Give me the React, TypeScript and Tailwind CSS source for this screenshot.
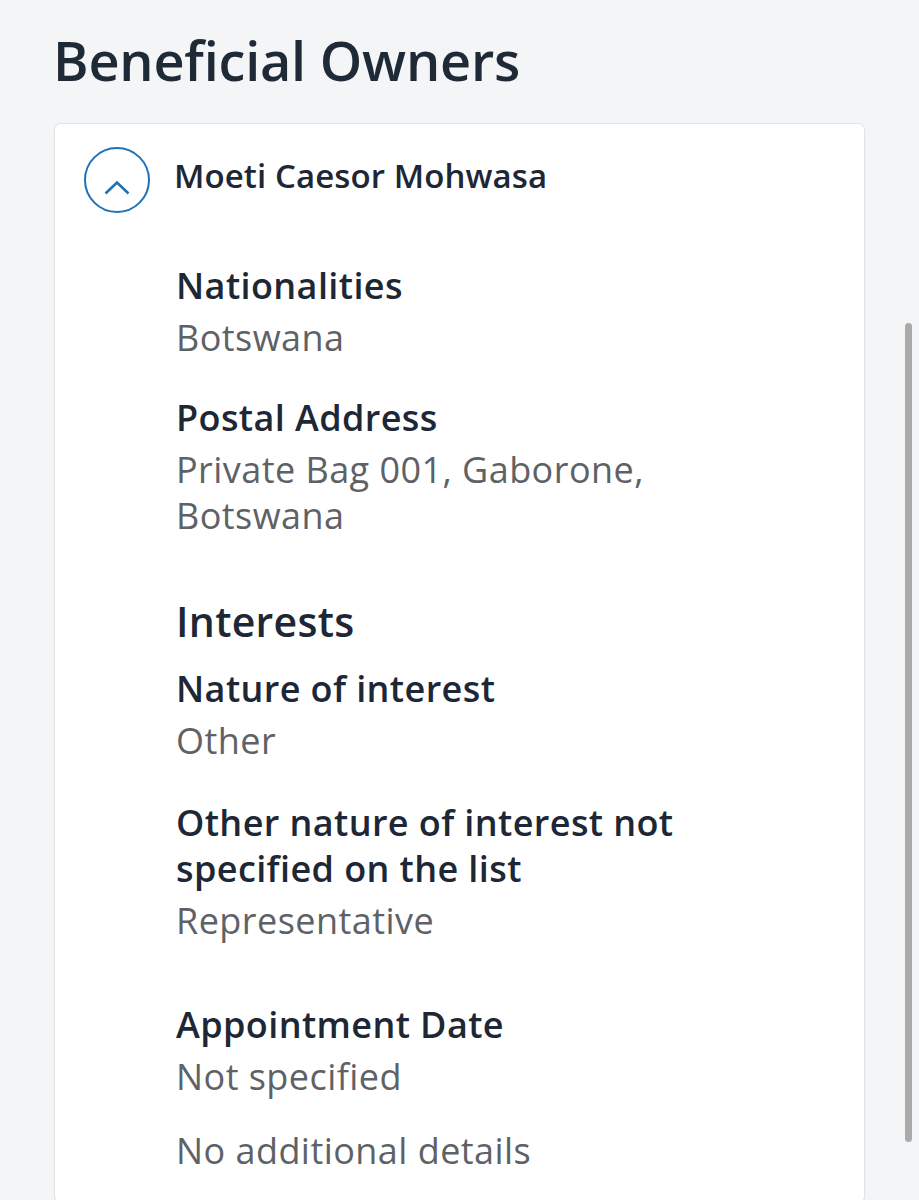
import React from "react";

function Field({ label, value, className = "" }: { label: string; value: string; className?: string }) {
  return (
    <div className={className}>
      <div className="text-[36px] leading-[46px] font-semibold tracking-[0.4px] text-[#1d2735]">{label}</div>
      <div className="mt-[6px] text-[36px] leading-[46px] font-normal tracking-[0.45px] text-[#5e6165]">{value}</div>
    </div>
  );
}

export default function App() {
  return (
    <div className="relative min-h-[1200px] h-[1200px] overflow-hidden bg-[#f4f5f7] font-['Open_Sans',sans-serif] pt-[28px]">
      <h1 className="ml-[53px] text-[54px] leading-[65px] font-semibold text-[#1f2a37] tracking-[-0.2px]">
        Beneficial Owners
      </h1>
      <div className="ml-[54px] mt-[30px] w-[811px] h-[1080px] bg-white border border-[#e1e3e7] rounded-[7px] shadow-[0_1px_2px_rgba(0,0,0,0.06)] pt-[23px] pl-[29px]">
        <div className="flex items-center">
          <svg width="66" height="66" viewBox="0 0 66 66" className="shrink-0">
            <circle cx="33" cy="33" r="32" fill="none" stroke="#1f71b8" strokeWidth="2" />
            <path d="M21.5 46.5 L33 35.5 L44.5 46.5" fill="none" stroke="#1f71b8" strokeWidth="2.6" />
          </svg>
          <span className="ml-[24px] mb-[8px] text-[33px] leading-[44px] font-semibold tracking-[0.1px] text-[#1d2735]">
            Moeti Caesor Mohwasa
          </span>
        </div>
        <div className="ml-[92px] mt-[50px] w-[570px]">
          <Field label="Nationalities" value="Botswana" />
          <Field className="mt-[34px]" label="Postal Address" value="Private Bag 001, Gaborone, Botswana" />
          <div className="mt-[55px] text-[41px] leading-[54px] font-semibold tracking-[0.3px] text-[#1d2735]">Interests</div>
          <Field className="mt-[18px]" label="Nature of interest" value="Other" />
          <Field className="mt-[36px]" label="Other nature of interest not specified on the list" value="Representative" />
          <Field className="mt-[58px]" label="Appointment Date" value="Not specified" />
          <div className="mt-[28px] text-[36px] leading-[46px] tracking-[0.45px] text-[#5e6165]">No additional details</div>
        </div>
      </div>
      <div className="absolute left-[905px] top-[323px] w-[7px] h-[819px] rounded-full bg-[#a9a9a9]" />
    </div>
  );
}
